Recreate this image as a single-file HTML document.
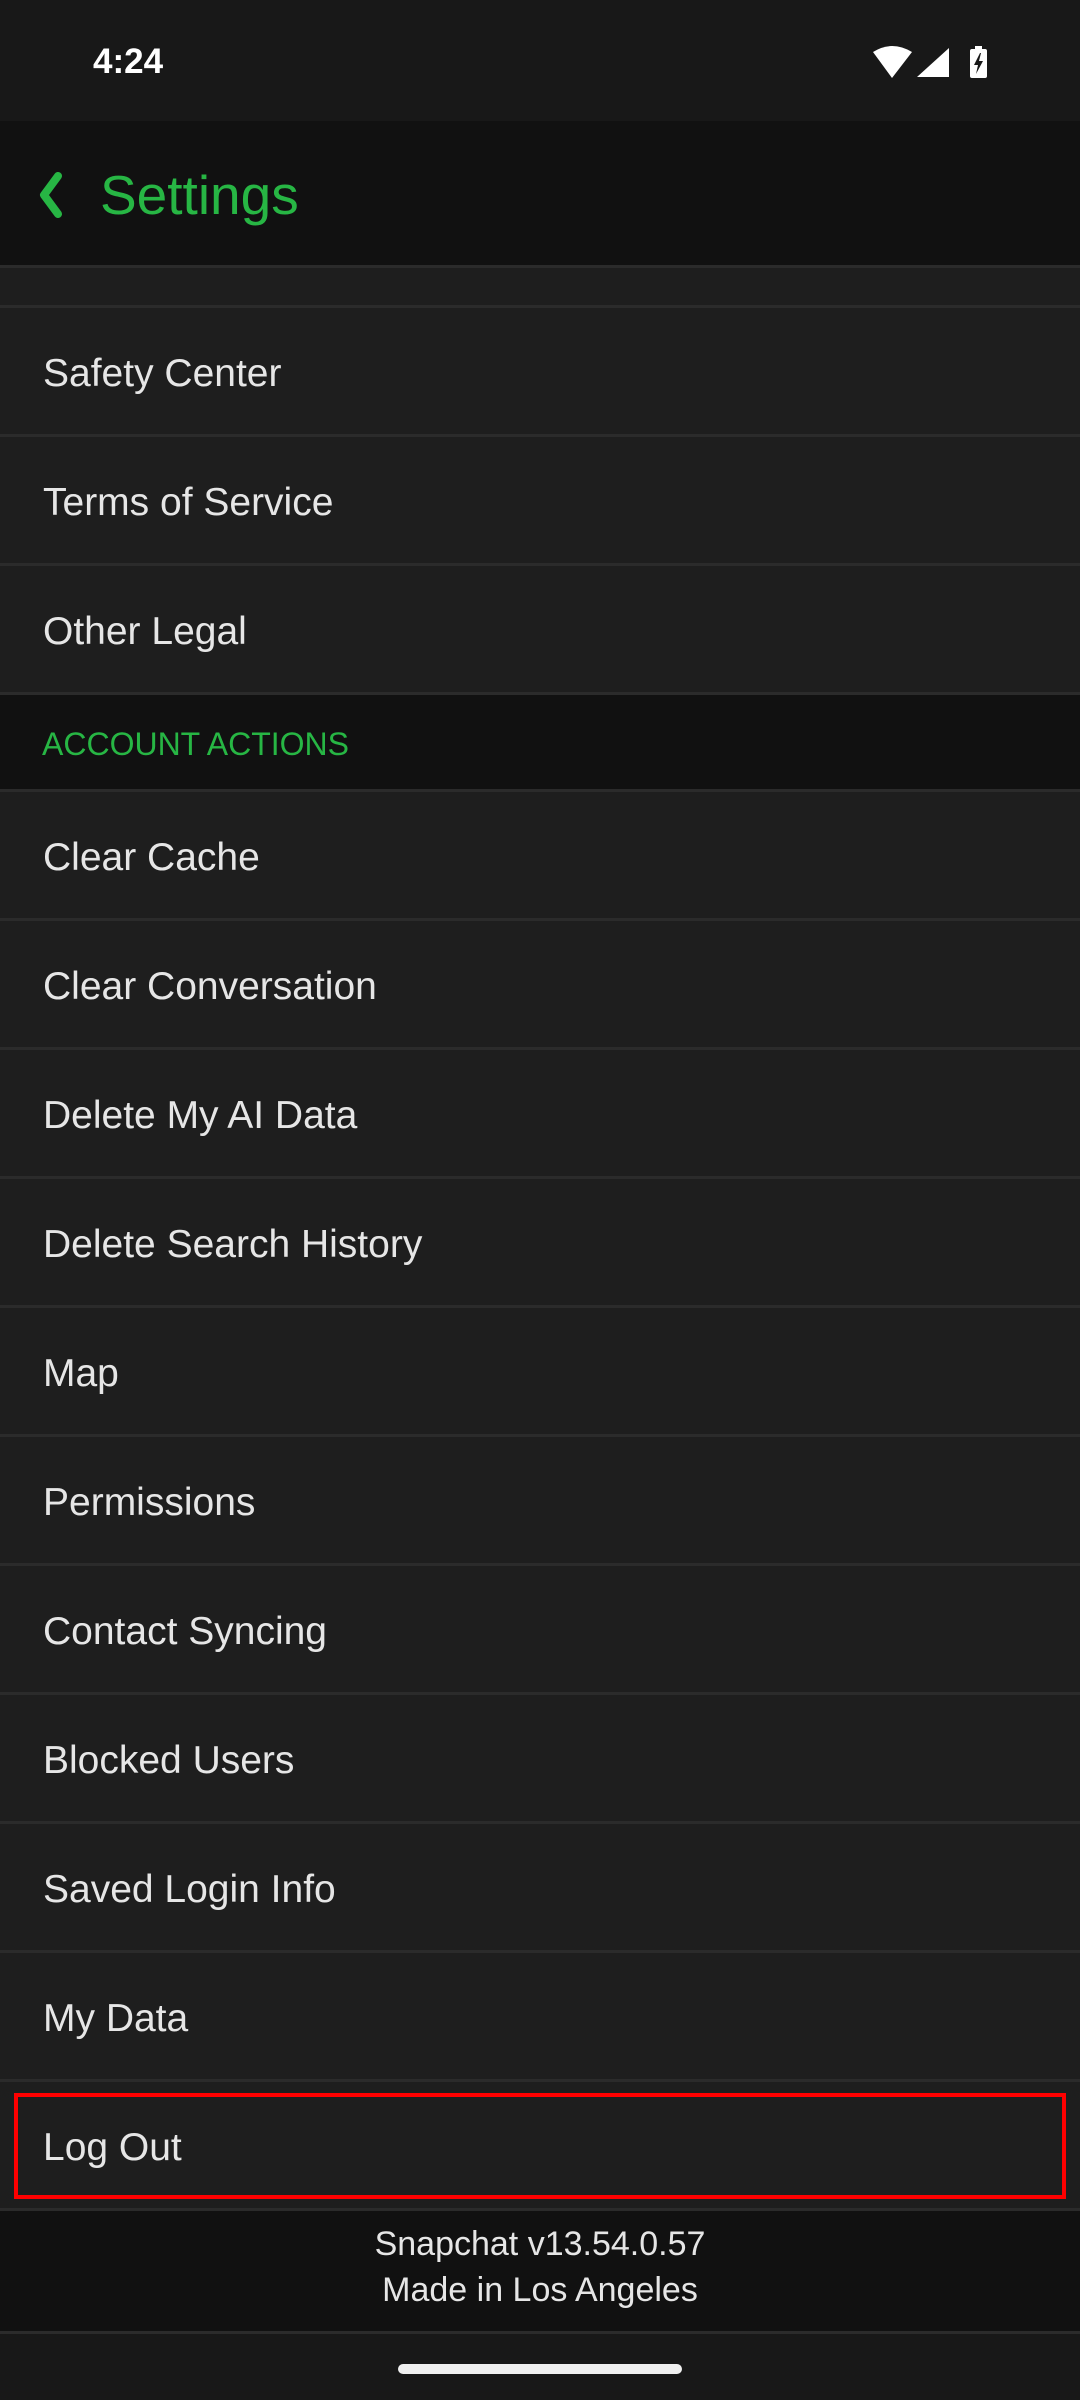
<!DOCTYPE html>
<html><head><meta charset="utf-8"><style>
*{margin:0;padding:0;box-sizing:border-box}
body{width:1080px;height:2400px;background:#181818;position:relative;overflow:hidden;font-family:"Liberation Sans",sans-serif}
.a{position:absolute}
.row{position:absolute;left:0;width:1080px;height:129px;background:#1e1e1e;border-top:3px solid #2b2b2b}
.row span{position:absolute;left:43px;top:45px;font-size:39px;line-height:41px;color:#e6e6e6;white-space:nowrap}
</style></head><body>
<div class="a" style="left:0;top:0;width:1080px;height:121px;background:#181818"></div>
<div class="a" style="left:93px;top:44px;font-size:35px;line-height:36px;color:#fff;font-weight:bold">4:24</div>
<svg class="a" style="left:870px;top:44px" width="124" height="38" viewBox="0 0 124 38">
<path d="M3 8 Q22 -4 42 8 L22 34 Z" fill="#fff"/>
<path d="M79 4 L79 33 L47 33 Z" fill="#fff"/>
<rect x="100" y="5" width="17" height="29" rx="2" fill="#fff"/>
<rect x="105" y="2" width="7" height="4" fill="#fff"/>
<path d="M110 9 L104 21 L108 21 L106 30 L113 17 L109 17 L111 9 Z" fill="#181818"/>
</svg>
<div class="a" style="left:0;top:121px;width:1080px;height:144px;background:#111"></div>
<svg class="a" style="left:36px;top:172px" width="30" height="46" viewBox="0 0 30 46"><path d="M22 4 L8 23 L22 42" stroke="#27b644" stroke-width="8" fill="none" stroke-linecap="round" stroke-linejoin="round"/></svg>
<div class="a" style="left:100px;top:168px;font-size:55px;line-height:55px;color:#27b644">Settings</div>
<div class="a" style="left:0;top:265px;width:1080px;height:40px;background:#1e1e1e;border-top:3px solid #2b2b2b"></div>
<div class="row" style="top:305px"><span>Safety Center</span></div>
<div class="row" style="top:434px"><span>Terms of Service</span></div>
<div class="row" style="top:563px"><span>Other Legal</span></div>
<div class="a" style="left:0;top:692px;width:1080px;height:97px;background:#111;border-top:3px solid #2b2b2b"></div>
<div class="a" style="left:42px;top:728px;font-size:32px;line-height:32px;color:#27b644">ACCOUNT ACTIONS</div>
<div class="row" style="top:789px"><span>Clear Cache</span></div>
<div class="row" style="top:918px"><span>Clear Conversation</span></div>
<div class="row" style="top:1047px"><span>Delete My AI Data</span></div>
<div class="row" style="top:1176px"><span>Delete Search History</span></div>
<div class="row" style="top:1305px"><span>Map</span></div>
<div class="row" style="top:1434px"><span>Permissions</span></div>
<div class="row" style="top:1563px"><span>Contact Syncing</span></div>
<div class="row" style="top:1692px"><span>Blocked Users</span></div>
<div class="row" style="top:1821px"><span>Saved Login Info</span></div>
<div class="row" style="top:1950px"><span>My Data</span></div>
<div class="row" style="top:2079px"><span>Log Out</span></div>
<div class="a" style="left:14px;top:2093px;width:1052px;height:106px;border:4px solid #f00"></div>
<div class="a" style="left:0;top:2208px;width:1080px;height:126px;background:#111;border-top:3px solid #2b2b2b;border-bottom:3px solid #2b2b2b"></div>
<div class="a" style="left:0;top:2221px;width:1080px;text-align:center;font-size:34px;line-height:46px;color:#e6e6e6">Snapchat v13.54.0.57<br>Made in Los Angeles</div>
<div class="a" style="left:398px;top:2364px;width:284px;height:10px;border-radius:5px;background:#f0f0f0"></div>
</body></html>
